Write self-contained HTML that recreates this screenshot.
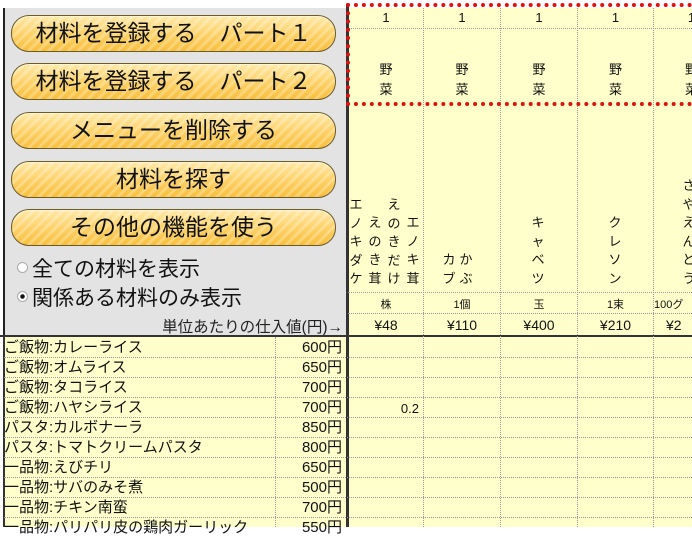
<!DOCTYPE html><html><head><meta charset="utf-8"><style>
body{margin:0;width:692px;height:527px;overflow:hidden;background:#fff;position:relative;font-family:"Liberation Sans","Noto Sans CJK JP",sans-serif;}
.a{position:absolute}
.panel{left:3px;top:8px;width:343px;height:327px;background:#e3e3e3;border-left:2px solid #222;}
.btn{position:absolute;left:11px;width:323px;height:35px;border:1px solid #6b5a2a;border-radius:18px;
background:repeating-linear-gradient(135deg,rgba(255,255,255,.25) 0 3px,rgba(255,255,255,0) 3px 7px),linear-gradient(#ffe9a8,#fdd26a 50%,#f8bf3c);
font-size:23px;color:#111;text-align:center;line-height:35px;box-shadow:inset 0 1px 0 #fff6d0;}
.y{background:#ffffcc}
.v{position:absolute;width:0;border-left:1px dotted #999}
.h{position:absolute;height:0;border-top:1px dotted #999}
.c{position:absolute;text-align:center;font-size:13px;color:#111}
.vt{position:absolute;font-size:13px;line-height:18.5px;width:14px;text-align:center;color:#111}
.row{position:absolute;left:4px;width:340px;height:20px;font-size:15px;line-height:20px;color:#111}
.row span{position:absolute;right:2px}
</style></head><body>
<div class="a panel"></div>
<div class="btn" style="top:15px">材料を登録する　パート１</div>
<div class="btn" style="top:63px">材料を登録する　パート２</div>
<div class="btn" style="top:112px">メニューを削除する</div>
<div class="btn" style="top:161px">材料を探す</div>
<div class="btn" style="top:209px">その他の機能を使う</div>
<div class="a" style="left:17px;top:253px;font-size:21px;color:#111"><span style="display:inline-block;width:9px;height:9px;border-radius:50%;background:#fff;border:1px solid #aaa;margin-right:4px;vertical-align:3px"></span>全ての材料を表示</div>
<div class="a" style="left:17px;top:282px;font-size:21px;color:#111"><span style="display:inline-block;width:9px;height:9px;border-radius:50%;background:radial-gradient(#111 2px,#fff 2.5px);border:1px solid #aaa;margin-right:4px;vertical-align:3px"></span>関係ある材料のみ表示</div>
<div class="a" style="right:349px;top:315px;font-size:15.5px;color:#222">単位あたりの仕入値(円)→</div>
<div class="a y" style="left:348px;top:8px;width:344px;height:327px"></div>
<div class="a y" style="left:4px;top:337px;width:688px;height:190px"></div>
<div class="a" style="left:346px;top:4px;width:3px;height:523px;background:#333"></div>
<div class="a" style="left:0;top:335px;width:692px;height:2px;background:#333"></div>
<div class="a" style="left:3px;top:335px;width:2px;height:192px;background:#333"></div>
<div class="v" style="left:423px;top:8px;height:519px"></div>
<div class="v" style="left:500px;top:8px;height:519px"></div>
<div class="v" style="left:577px;top:8px;height:519px"></div>
<div class="v" style="left:653px;top:8px;height:519px"></div>
<div class="v" style="left:275px;top:337px;height:190px"></div>
<div class="h" style="left:348px;top:28px;width:344px"></div>
<div class="h" style="left:348px;top:292px;width:344px"></div>
<div class="h" style="left:348px;top:313px;width:344px"></div>
<div class="a" style="left:346px;top:3px;width:346px;border-top:4px dotted #e01010;border-left:4px dotted #e01010;border-bottom:4px dotted #e01010;box-sizing:border-box;height:103px"></div>
<div class="c" style="left:349px;top:10px;width:74px">1</div><div class="c" style="left:424px;top:10px;width:76px">1</div><div class="c" style="left:501px;top:10px;width:76px">1</div><div class="c" style="left:578px;top:10px;width:75px">1</div><div class="c" style="left:654px;top:10px;width:75px">1</div>
<div class="c" style="left:349px;top:60px;width:74px;line-height:20px">野<br>菜</div><div class="c" style="left:424px;top:60px;width:76px;line-height:20px">野<br>菜</div><div class="c" style="left:501px;top:60px;width:76px;line-height:20px">野<br>菜</div><div class="c" style="left:578px;top:60px;width:75px;line-height:20px">野<br>菜</div><div class="c" style="left:654px;top:60px;width:75px;line-height:20px">野<br>菜</div>
<div class="vt" style="left:349px;top:196px">エ<br>ノ<br>キ<br>ダ<br>ケ</div>
<div class="vt" style="left:368px;top:214px">え<br>の<br>き<br>茸</div>
<div class="vt" style="left:387px;top:196px">え<br>の<br>き<br>だ<br>け</div>
<div class="vt" style="left:406px;top:214px">エ<br>ノ<br>キ<br>茸</div>
<div class="vt" style="left:442px;top:251px">カ<br>ブ</div><div class="vt" style="left:459px;top:251px">か<br>ぶ</div>
<div class="vt" style="left:531px;top:214px">キ<br>ャ<br>ベ<br>ツ</div>
<div class="vt" style="left:608px;top:214px">ク<br>レ<br>ソ<br>ン</div>
<div class="vt" style="left:682px;top:177px">さ<br>や<br>え<br>ん<br>ど<br>う</div>
<div class="c" style="left:349px;top:296px;width:74px;font-size:11px">株</div><div class="c" style="left:424px;top:296px;width:76px;font-size:11px">1個</div><div class="c" style="left:501px;top:296px;width:76px;font-size:11px">玉</div><div class="c" style="left:578px;top:296px;width:75px;font-size:11px">1束</div><div class="c" style="left:654px;top:296px;width:75px;font-size:11px;text-align:left">100グ</div>
<div class="c" style="left:349px;top:317px;width:74px;font-size:14px">¥48</div><div class="c" style="left:424px;top:317px;width:76px;font-size:14px">¥110</div><div class="c" style="left:501px;top:317px;width:76px;font-size:14px">¥400</div><div class="c" style="left:578px;top:317px;width:75px;font-size:14px">¥210</div><div class="c" style="left:654px;top:317px;width:75px;text-align:left;padding-left:12px;font-size:14px">¥2</div>
<div class="h" style="left:4px;top:357px;width:688px"></div><div class="h" style="left:4px;top:377px;width:688px"></div><div class="h" style="left:4px;top:397px;width:688px"></div><div class="h" style="left:4px;top:417px;width:688px"></div><div class="h" style="left:4px;top:437px;width:688px"></div><div class="h" style="left:4px;top:457px;width:688px"></div><div class="h" style="left:4px;top:477px;width:688px"></div><div class="h" style="left:4px;top:497px;width:688px"></div><div class="h" style="left:4px;top:517px;width:688px"></div>
<div class="row" style="top:338px">ご飯物:カレーライス<span>600円</span></div>
<div class="row" style="top:358px">ご飯物:オムライス<span>650円</span></div>
<div class="row" style="top:378px">ご飯物:タコライス<span>700円</span></div>
<div class="row" style="top:398px">ご飯物:ハヤシライス<span>700円</span></div>
<div class="row" style="top:418px">パスタ:カルボナーラ<span>850円</span></div>
<div class="row" style="top:438px">パスタ:トマトクリームパスタ<span>800円</span></div>
<div class="row" style="top:458px">一品物:えびチリ<span>650円</span></div>
<div class="row" style="top:478px">一品物:サバのみそ煮<span>500円</span></div>
<div class="row" style="top:498px">一品物:チキン南蛮<span>700円</span></div>
<div class="row" style="top:518px">一品物:パリパリ皮の鶏肉ガーリック<span>550円</span></div>
<div class="c" style="left:349px;top:401px;width:70px;text-align:right">0.2</div>
</body></html>
